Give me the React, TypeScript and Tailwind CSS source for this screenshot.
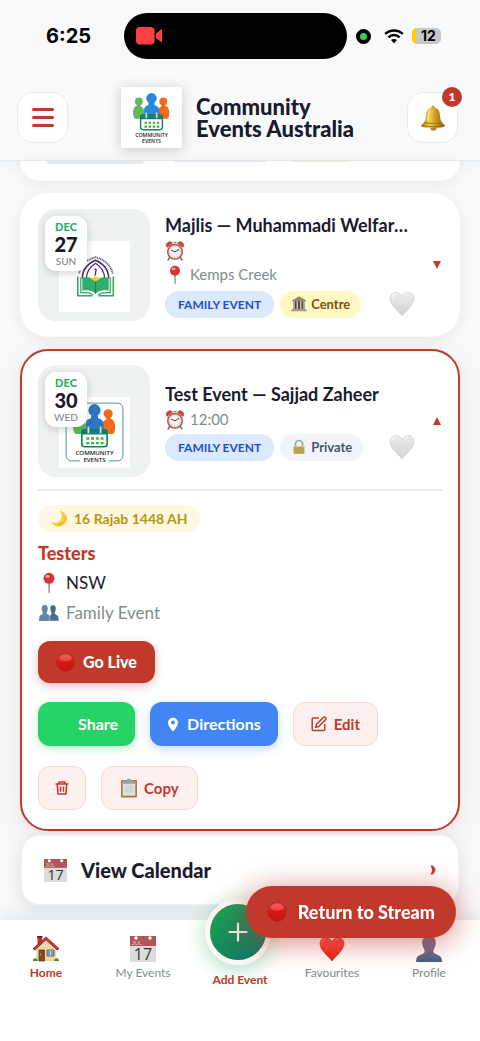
import type { ReactNode } from "react";

function ClockIcon() {
  return (
    <svg viewBox="0 0 20 20" className="size-5" aria-hidden="true">
      <path d="M5 16l-2 3M15 16l2 3" stroke="#6f6b6b" strokeWidth="1.4" strokeLinecap="round" />
      <path d="M2 6.4A3.2 3.2 0 0 1 7.6 2.2zM18 6.4a3.2 3.2 0 0 0-5.6-4.2z" fill="#c94b40" stroke="#8f302b" strokeWidth=".4" />
      <path d="M8.5 1.5h3" stroke="#8b8585" strokeWidth="1.2" />
      <circle cx="10" cy="10.8" r="8" fill="#c5443a" />
      <circle cx="10" cy="10.8" r="6.5" fill="#f3f1ee" stroke="#a5a5a5" strokeWidth=".5" />
      <circle cx="10" cy="10.8" r="5.3" fill="none" stroke="#666" strokeWidth=".8" strokeDasharray=".5 2.275" />
      <path d="M6.500 9.300l3.500 1.500 3.800-2.300" fill="none" stroke="#333" strokeWidth=".9" strokeLinecap="round" />
    </svg>
  );
}

function PushpinIcon({ className }: { className: string }) {
  return (
    <svg viewBox="0 0 20 20" className={className} aria-hidden="true">
      <path d="M9.300 8h1.600l-.2 10.500-.6 1-.6-1z" fill="#9b8c86" />
      <circle cx="10" cy="5.700" r="5" fill="#d6323a" />
      <path d="M6 8.600a5 5 0 0 0 8 0 5 5 0 0 1-8 0z" fill="#9f1e27" />
      <ellipse cx="8.600" cy="3.900" rx="1.900" ry="1.400" fill="#ff9b9b" />
    </svg>
  );
}

function CalendarIcon({ className }: { className: string }) {
  return (
    <svg viewBox="0 0 26 26" className={className} aria-hidden="true">
      <path d="M0 0h26v26H0z" fill="#dcdcdc" />
      <path d="M0 0h26v10H0z" fill="#b0555b" />
      <circle cx="6" cy="2" r="1.700" fill="#fff" />
      <circle cx="20" cy="2" r="1.700" fill="#fff" />
      <text x="1.500" y="9" fontSize="6" fill="#e8c4c5" fontFamily="Liberation Sans, sans-serif">JUL</text>
      <text x="13" y="23.500" fontSize="16" textAnchor="middle" fill="#333" fontFamily="Open Sans, sans-serif">17</text>
    </svg>
  );
}

function HeartIcon({ red = false }: { red?: boolean }) {
  const id = red ? "heart-red" : "heart-white";
  return (
    <svg viewBox="0 0 26 26" className="size-[26px]" aria-hidden="true">
      <defs>
        <linearGradient id={id} x1="0" y1="0" x2="0" y2="1">
          <stop offset="0" stopColor={red ? "#ff4a3f" : "#ececec"} />
          <stop offset="1" stopColor={red ? "#e12219" : "#d2d2d2"} />
        </linearGradient>
      </defs>
      <path
        d="M13 25C10 20.500 1 14.500 1 7.700 1 3.900 3.600 1.500 6.800 1.500c2.800 0 5 1.600 6.200 4.300 1.200-2.700 3.400-4.300 6.200-4.300 3.200 0 5.800 2.400 5.800 6.200C25 14.500 16 20.500 13 25z"
        fill={`url(#${id})`}
        stroke={red ? "#c4221c" : "#c9c9c9"}
        strokeWidth=".6"
      />
      <path d="M3 7c.4-2.400 2-3.700 4-3.700M16 4.500c1-.9 2-1.200 3.200-1.200" fill="none" stroke={red ? "#ff8f86" : "#fff"} strokeWidth="1" />
    </svg>
  );
}

function BellIcon() {
  return (
    <svg viewBox="0 0 26 26" className="size-[26px]" aria-hidden="true">
      <defs>
        <linearGradient id="brass" x1="0" x2="1">
          <stop offset="0" stopColor="#a87a10" />
          <stop offset=".35" stopColor="#f3cf4c" />
          <stop offset=".65" stopColor="#c5941c" />
          <stop offset="1" stopColor="#8f620c" />
        </linearGradient>
      </defs>
      <ellipse cx="13.500" cy="23.500" rx="3" ry="2" fill="#b8742e" />
      <circle cx="13" cy="2.500" r="1.800" fill="#c79b25" />
      <path d="M13 2.600c5 0 6.700 3.600 7 8 .3 4.500 1.300 6.800 4.400 9.200.8.700.4 2-.7 2.200-6.500 1.500-15 1.500-21.400 0-1.100-.3-1.500-1.500-.7-2.200C4.700 17.400 5.700 15.100 6 10.600c.3-4.400 2-8 7-8z" fill="url(#brass)" />
      <path d="M4.500 17.500c5 1.300 12 1.300 17 0M2 20.500c7 1.700 15 1.700 22 0" fill="none" stroke="#8c640f" strokeWidth=".8" />
      <path d="M9.500 6c-1.200 2-1 6-1.800 10" fill="none" stroke="#fff1a0" strokeWidth="1.200" />
    </svg>
  );
}

function BuildingIcon() {
  return (
    <svg viewBox="0 0 16 16" className="size-4" aria-hidden="true">
      <path d="M8 .8l7 4H1z" fill="#8c8778" stroke="#6e6a5e" strokeWidth=".5" />
      <path d="M2 5h12v8H2z" fill="#4c463c" />
      <path d="M3 5v8M6.300 5v8M9.700 5v8M13 5v8" stroke="#d0c7ae" strokeWidth="1.500" />
      <path d="M1 13h14v1H1zM0 14h16v1.200H0z" fill="#a49d8a" />
    </svg>
  );
}

function LockIcon() {
  return (
    <svg viewBox="0 0 16 16" className="size-4" aria-hidden="true">
      <path d="M4.500 8V5a3.500 3.500 0 0 1 7 0v3" fill="none" stroke="#9da2a4" strokeWidth="1.700" />
      <rect x="2.500" y="7" width="11" height="8" rx=".8" fill="#c2b05a" />
      <path d="M3 9h10M3 11h10M3 13h10" stroke="#9d8b3d" strokeWidth=".6" />
      <path d="M3 7.500h10" stroke="#e6dc98" strokeWidth=".7" />
    </svg>
  );
}

function MoonIcon() {
  return (
    <svg viewBox="0 0 18 18" className="size-[18px]" aria-hidden="true">
      <path d="M9.500.8c5 .7 8 4.300 7.500 8.700-.6 4.600-4.500 7.600-9 7.200C4.700 16.400 2 14.400 1 11.800c3 1.500 6.500 1.200 8.700-.8 2.700-2.500 2.600-7-.2-10.200z" fill="#f9cf48" />
      <path d="M15.500 7c.3 4.500-3.500 8-8.500 7.700" fill="none" stroke="#e2a91e" strokeWidth=".9" />
    </svg>
  );
}

function PeopleIcon() {
  return (
    <svg viewBox="-1 0 22 18" className="h-[18px] w-[22px]" aria-hidden="true">
      <path d="M5.700 1C8 1 9 2.800 8.800 5c-.2 2-1 3-1.100 4.300 0 1.300 3.300 1.500 3.800 3.500L12 17H0l.4-4.200c.4-2 3.400-2.200 3.400-3.500C3.700 8 2.900 7 2.700 5 2.500 2.800 3.400 1 5.700 1z" fill="#6286a6" />
      <path d="M14 1c2.300 0 3.200 1.800 3 4-.2 2-1 3-1.100 4.300 0 1.300 3.100 1.500 3.500 3.500L20 17h-9.500l.4-4.200c.3-2 1.400-2.200 1.400-3.500C12.100 8 11.300 7 11.100 5c-.2-2.200.6-4 2.900-4z" fill="#476c90" stroke="#fff" strokeWidth=".4" />
    </svg>
  );
}

function RedBall({ className }: { className: string }) {
  return (
    <svg viewBox="0 0 20 20" className={className} aria-hidden="true">
      <defs>
        <linearGradient id="ball" x1="0" y1="0" x2="0" y2="1">
          <stop offset="0" stopColor="#f0413c" />
          <stop offset=".5" stopColor="#d91512" />
          <stop offset="1" stopColor="#c41512" />
        </linearGradient>
      </defs>
      <circle cx="10" cy="10" r="9.300" fill="url(#ball)" stroke="#9d1f1b" strokeWidth=".5" />
      <ellipse cx="10" cy="5.200" rx="6.500" ry="3.600" fill="#fff" opacity=".18" />
    </svg>
  );
}

function ClipboardIcon() {
  return (
    <svg viewBox="0 0 18 20" className="h-5 w-[18px]" aria-hidden="true">
      <rect x="1" y="2" width="16" height="17.500" rx="1" fill="#a77b47" />
      <path d="M2.700 4.500h12.600v13.200H2.700z" fill="#e1e1e1" />
      <path d="M4.500 8h9M4.500 10h9M4.500 12h9M4.500 14h9" stroke="#c2c5c7" strokeWidth=".8" />
      <path d="M2.500 2.700h4L7.500.8h3l1 1.900h4v3h-13z" fill="#9ba0a5" />
    </svg>
  );
}

function TrashIcon() {
  return (
    <svg viewBox="0 0 16 16" className="size-4" fill="none" stroke="#c0392b" strokeWidth="1.500" aria-hidden="true">
      <path d="M1.500 4h13M5 4V2h6v2M3.300 4l.7 10h8l.7-10M6.500 6.500v5.300M9.500 6.500v5.300" strokeLinejoin="round" />
    </svg>
  );
}

function EditIcon() {
  return (
    <svg viewBox="0 0 16 16" className="size-4" fill="none" stroke="#c0392b" strokeWidth="1.500" strokeLinejoin="round" aria-hidden="true">
      <path d="M8 2H2.500a1.300 1.300 0 0 0-1.300 1.300v10a1.300 1.300 0 0 0 1.300 1.300h10a1.300 1.300 0 0 0 1.300-1.300V8" />
      <path d="M5.500 8.300L12.300 1.500a1.500 1.500 0 0 1 2.200 2.200L7.700 10.500l-3 .8z" />
    </svg>
  );
}

function HouseIcon() {
  return (
    <svg viewBox="0 0 26 26" className="size-[26px]" aria-hidden="true">
      <path d="M4.500 1h4.500v8H4.500z" fill="#b7332d" />
      <path d="M4 0h5.500v1.800H4z" fill="#672522" />
      <path d="M13 3.500L23 13v12H3V13z" fill="#f0d8a5" />
      <path d="M.8 13.500L13 2.300l12.200 11.200" fill="none" stroke="#5b2422" strokeWidth="2.800" />
      <path d="M1.500 12.500L13 2l11.500 10.500" fill="none" stroke="#cb3d34" strokeWidth="1.900" />
      <path d="M6 14h5.500v11H6z" fill="#85472f" stroke="#5c2d20" strokeWidth=".7" />
      <path d="M14 14h7v6h-7z" fill="#5ba8dc" stroke="#8e623f" strokeWidth="1" />
      <path d="M17.500 14v6" stroke="#e8f0f4" strokeWidth=".6" />
      <circle cx="7.500" cy="18.500" r=".7" fill="#e5c25b" />
      <path d="M0 25c-.3-3 4-4.300 5 0zM21 25c1-4.300 5.300-3 5 0z" fill="#3f8c31" />
    </svg>
  );
}

function ProfileIcon() {
  return (
    <svg viewBox="0 0 26 26" className="size-[26px]" aria-hidden="true">
      <defs>
        <linearGradient id="bust" x1="0" y1="0" x2="0" y2="1">
          <stop offset="0" stopColor="#806b88" />
          <stop offset=".65" stopColor="#666b8c" />
          <stop offset="1" stopColor="#405d83" />
        </linearGradient>
      </defs>
      <path d="M13 0c5 0 7.300 3.500 6.700 8-.4 3.400-2.200 5-2.400 7.500-.1 3.300 7.200 2.500 8.200 7L26 26H0l.5-3.500c1-4.500 8.300-3.700 8.200-7C8.500 13 6.700 11.400 6.300 8 5.700 3.500 8 0 13 0z" fill="url(#bust)" />
    </svg>
  );
}

function CommunityLogo({ framed = false, className }: { framed?: boolean; className: string }) {
  return (
    <svg viewBox="0 0 70 70" className={className} role="img" aria-label="Community Events">
      <path d="M0 0h70v70H0z" fill="#fff" />
      {framed && <path d="M21 63h-9a5 5 0 0 1-5-5V11a5 5 0 0 1 5-5h46a5 5 0 0 1 5 5v47a5 5 0 0 1-5 5h-9" fill="none" stroke="#438a83" strokeWidth=".9" />}
      <g fill="#62b95b">
        <circle cx="20.500" cy="16.500" r="4.500" />
        <path d="M18.500 20h4v2.500c3 1 4 3 4 6.500v7.500H16c-3-3-3-13 1-14.500 1-.3 1.500-.5 1.500-2z" />
      </g>
      <g fill="#f76b18">
        <circle cx="48.500" cy="16.500" r="4.500" />
        <path d="M46.500 20h4c0 1.500.5 1.700 1.500 2 4 1.500 4.500 11.500 1.500 14.500H42V29c0-3.500 1.500-5.500 4.500-6.500z" />
      </g>
      <g fill={framed ? "#2d78c4" : "#2589dc"}>
        <circle cx="35" cy="13" r="6" />
        <path d="M31.500 18h7v3c4.500 1 5.500 4 5.500 7v6H26.500v-7c0-3 1-5 5-6z" />
      </g>
      <rect x="22.500" y="32" width="25" height="17" rx="3" fill="#fff" stroke="#12806e" strokeWidth="1.600" />
      <path d="M22 37v-2.500a3 3 0 0 1 3-3h20a3 3 0 0 1 3 3V37z" fill="#12806e" />
      <path d="M27 41h17M27 45.500h17" stroke="#43ae35" strokeWidth="2.400" strokeDasharray="2.800 1.900" />
      <path d="M29 30v5M41 30v5" stroke="#7c9b98" strokeWidth="2.600" strokeLinecap="round" />
      <path d="M29 30v5M41 30v5" stroke="#dae4e2" strokeWidth="1.200" strokeLinecap="round" />
      <text x="35" y="57.500" fontSize="6" fontWeight="600" textAnchor="middle" fill="#222" fontFamily="Open Sans, sans-serif">COMMUNITY</text>
      <text x="35" y="64" fontSize="6" fontWeight="600" textAnchor="middle" fill="#222" fontFamily="Open Sans, sans-serif">EVENTS</text>
    </svg>
  );
}

function MajlisLogo({ className }: { className: string }) {
  return (
    <svg viewBox="0 0 70 70" className={className} role="img" aria-label="Muhammadi Welfare">
      <path d="M0 0h70v70H0z" fill="#fff" />
      <path d="M20 32c1-8 6-13 16-16 10 3 15 8 17 16" fill="none" stroke="#654077" strokeWidth="1.800" strokeDasharray="1 .7" />
      <path d="M23 37c0-8 4-14 13-18 9 4 13 10 13 18" fill="none" stroke="#4d226b" strokeWidth="1.500" />
      <path d="M27 37c0-6 3-11 9-15 6 4 9 9 9 15" fill="none" stroke="#4d226b" strokeWidth="1.100" />
      <path d="M35 28c3-1 1 2 1 3s1 2-1 3" fill="none" stroke="#4d226b" strokeWidth="1.200" />
      <path d="M23 36c6-1 10 0 13 3 3-3 7-4 13-3v13c-6-1-10 0-13 3-3-3-7-4-13-3z" fill="#30ad6d" />
      <path d="M36 39v13" stroke="#1c8250" strokeWidth="1" />
      <path d="M18.500 35v19H33M53.500 35v19H39" fill="none" stroke="#2aac62" strokeWidth="1.500" />
      <path d="M21.500 36v15c5-.5 9 0 12 2M50.500 36v15c-5-.5-9 0-12 2" fill="none" stroke="#2aac62" strokeWidth="1.200" />
      <path d="M31 37l5-2 5 2-5 3z" fill="#f7cf19" />
    </svg>
  );
}

function StatusBar() {
  return (
    <div className="flex h-[72px] items-center pr-[39px] pl-[46px] font-['Inter',sans-serif]">
      <time className="w-[78px] text-xl font-bold text-black">6:25</time>
      <div className="flex h-[46px] flex-1 items-center rounded-full bg-black pl-3">
        <svg viewBox="0 0 26 18" className="h-[18px] w-[26px]" fill="#ff4145" aria-label="Recording" role="img">
          <rect width="18.500" height="17.500" rx="4" />
          <path d="M19.800 6.800L25 2.500c.5-.4 1-.1 1 .5v11.500c0 .6-.5.9-1 .5l-5.200-4.300z" />
        </svg>
      </div>
      <span className="mx-[9px] size-[15px] rounded-full border-4 border-black bg-[#30d158]" />
      <svg viewBox="0 0 20 15" className="mr-2 ml-1 h-[15px] w-5" fill="none" stroke="#000" strokeWidth="2.500" aria-label="Wi-Fi" role="img">
        <path d="M1.200 4.900c5-4.700 12.600-4.700 17.600 0M4.400 8.300c3.200-3 8-3 11.200 0" />
        <path d="M7 11c1.700-1.500 4.300-1.500 6 0l-3 3.300z" fill="#000" stroke="none" />
      </svg>
      <div className="h-4 w-[29px] overflow-hidden rounded-[5px] border-l-4 border-[#ffcc00] bg-[#c7c8ca] text-center text-sm leading-4 font-bold text-black">
        12
      </div>
    </div>
  );
}

function Header() {
  return (
    <header className="border-b border-[#e6ebef] bg-[#f8f9fb] shadow-[0_2px_12px_rgba(0,0,0,0.06)]">
      <StatusBar />
      <div className="flex h-[88px] items-center justify-between pt-1 pr-[22px] pb-px pl-[17px]">
        <button aria-label="Menu" className="flex size-[51px] flex-col items-center justify-center gap-[5px] rounded-2xl border border-[#e6ecf0] bg-white">
          <span className="h-[3px] w-[22px] rounded-full bg-[#c0392b]" />
          <span className="h-[3px] w-[22px] rounded-full bg-[#c0392b]" />
          <span className="h-[3px] w-[22px] rounded-full bg-[#c0392b]" />
        </button>
        <div className="flex items-center gap-[14px]">
          <CommunityLogo className="size-[61px] shadow-[0_2px_12px_rgba(0,0,0,0.2)]" />
          <h1 className="text-[22px] leading-[22px] font-black">
            Community
            <br />
            Events Australia
          </h1>
        </div>
        <button aria-label="Notifications" className="relative flex size-[51px] items-center justify-center rounded-2xl border border-[#e6ecf0] bg-white">
          <BellIcon />
          <span className="absolute -top-[6px] -right-[5px] size-5 rounded-full bg-[#c0392b] text-center text-xs leading-5 font-black text-white">
            1
          </span>
        </button>
      </div>
    </header>
  );
}

type EventSummaryProps = {
  day: string;
  weekday: string;
  title: string;
  time?: string;
  place?: string;
  logo: ReactNode;
  tag: ReactNode;
  open?: boolean;
};

function EventSummary({ day, weekday, title, time, place, logo, tag, open = false }: EventSummaryProps) {
  return (
    <div className="flex items-center">
      <div className="relative flex h-28 w-28 shrink-0 justify-center rounded-[18px] bg-[#eff2f2] pt-8">
        {logo}
        <div className="absolute top-[7px] left-[7px] flex h-[55px] w-[42px] flex-col items-center rounded-[11px] bg-white pt-1 shadow-[0_2px_8px_rgba(0,0,0,0.18)]">
          <span className="text-[11px] leading-[14px] font-black text-[#27ae60]">DEC</span>
          <span className="text-xl leading-5 font-black">{day}</span>
          <span className="text-[10px] leading-[14px] font-medium text-[#7f8c8d]">{weekday}</span>
        </div>
      </div>
      <div className="ml-[15px] min-w-0 flex-1">
        <h2 className="mb-[2px] truncate text-lg leading-6 font-bold">{title}</h2>
        <p className="flex h-6 items-center gap-[5px] text-[15px] text-[#7f8c8d]">
          <ClockIcon />
          {time}
        </p>
        {place && (
          <p className="mb-1 flex h-6 items-center gap-[5px] text-[15px] text-[#7f8c8d]">
            <PushpinIcon className="size-5" />
            {place}
          </p>
        )}
        <div className="mt-[2px] flex items-center gap-[6px]">
          <span className="rounded-full bg-[#dbeafe] px-[13px] text-xs leading-[27px] font-bold text-[#1d4ed8]">FAMILY EVENT</span>
          {tag}
          <button aria-label="Add to favourites" className="ml-auto">
            <HeartIcon />
          </button>
        </div>
      </div>
      <button aria-label={open ? "Collapse" : "Expand"} aria-expanded={open} className="ml-[17px] w-[10px]">
        <svg viewBox="0 0 10 10" className="size-[10px]" fill="#c0392b" aria-hidden="true">
          {open ? <path d="M5 1l4 8H1z" /> : <path d="M1 1h8L5 9z" />}
        </svg>
      </button>
    </div>
  );
}

function ExpandedDetails() {
  return (
    <div className="mt-3 border-t-2 border-[#e9edf1] pt-[14px]">
      <div className="flex h-[27px] w-fit items-center gap-[6px] rounded-full bg-[#fef8e3] px-3 text-sm font-bold text-[#b8960c]">
        <MoonIcon />
        16 Rajab 1448 AH
      </div>
      <h3 className="mt-[6px] text-lg leading-[30px] font-black text-[#c0392b]">Testers</h3>
      <p className="flex h-[30px] items-center gap-[6px] text-[17px]">
        <PushpinIcon className="size-[22px]" />
        NSW
      </p>
      <p className="flex h-[30px] items-center gap-[6px] text-[17px] text-[#7f8c8d]">
        <PeopleIcon />
        Family Event
      </p>
      <button className="mt-[13px] flex h-[42px] items-center gap-2 rounded-xl bg-[#c0392b] px-[18px] text-base font-black text-white shadow-[0_3px_10px_rgba(192,57,43,0.3)]">
        <RedBall className="size-[19px]" />
        Go Live
      </button>
      <div className="mt-[19px] flex flex-wrap gap-x-[15px] gap-y-5 pr-2">
        <button className="h-11 rounded-xl bg-[#25d366] pr-[17px] pl-10 text-base font-bold text-white shadow-[0_3px_10px_rgba(37,211,102,0.3)]">
          Share
        </button>
        <button className="flex h-11 items-center gap-2 rounded-xl bg-[#4285f4] px-[17px] text-base font-bold text-white shadow-[0_3px_10px_rgba(66,133,244,0.3)]">
          <svg viewBox="0 0 12 15" className="h-[15px] w-3" fill="#fff" aria-hidden="true">
            <path fillRule="evenodd" d="M6 .7a5 5 0 0 0-5 5C1 9.300 6 14.500 6 14.500s5-5.200 5-8.800a5 5 0 0 0-5-5zm0 6.700A1.900 1.900 0 1 1 6 3.600a1.900 1.900 0 0 1 0 3.800z" />
          </svg>
          Directions
        </button>
        <button className="flex h-11 items-center gap-[7px] rounded-xl border border-[#f8d8d6] bg-[#fdf0ef] px-[17px] text-[15px] font-bold text-[#c0392b]">
          <EditIcon />
          Edit
        </button>
        <button aria-label="Delete" className="flex h-11 w-12 items-center justify-center rounded-xl border border-[#f8d8d6] bg-[#fdf0ef]">
          <TrashIcon />
        </button>
        <button className="flex h-11 items-center gap-[6px] rounded-xl border border-[#f8d8d6] bg-[#fdf0ef] px-[18px] text-[15px] font-bold text-[#c0392b]">
          <ClipboardIcon />
          Copy
        </button>
      </div>
    </div>
  );
}

function NavItem({ icon, label, active = false }: { icon: ReactNode; label: string; active?: boolean }) {
  return (
    <a href="#" className={active ? "flex flex-col items-center pt-4 font-bold text-[#c0392b]" : "flex flex-col items-center pt-4 text-[#7f8c8d]"}>
      {icon}
      <span className="mt-[3px] text-xs leading-4">{label}</span>
    </a>
  );
}

function BottomNav() {
  return (
    <nav className="mt-[13px] grid grid-cols-[92fr_102fr_92fr_92fr_102fr] border-t border-[#e9edf1] bg-white pb-[54px] shadow-[0_-3px_16px_rgba(0,0,0,0.08)]">
      <NavItem icon={<HouseIcon />} label="Home" active />
      <NavItem icon={<CalendarIcon className="size-[26px]" />} label="My Events" />
      <a href="#" className="-mt-[21px] flex flex-col items-center font-bold text-[#c0392b]">
        <span className="mr-1 flex size-[66px] items-center justify-center rounded-full border-[5px] border-[#fff5f4] bg-linear-to-br from-[#1ca64f] to-[#127064] shadow-[0_4px_20px_rgba(39,174,96,0.4)]">
          <svg viewBox="0 0 20 20" className="size-5" stroke="#f8efe9" strokeWidth="2.200" strokeLinecap="round" aria-hidden="true">
            <path d="M10 1.500v17M1.500 10h17" />
          </svg>
        </span>
        <span className="mt-[7px] text-xs leading-4">Add Event</span>
      </a>
      <NavItem icon={<HeartIcon red />} label="Favourites" />
      <NavItem icon={<ProfileIcon />} label="Profile" />
    </nav>
  );
}

export default function App() {
  return (
    <div className="relative flex min-h-screen flex-col bg-[#f8f9fb] font-['Lato','Open_Sans',sans-serif] text-[#1a1a2e]">
      <Header />
      <main className="px-5">
        {/* tail of the card that is scrolled under the header */}
        <div className="flex h-5 items-start rounded-b-[28px] bg-white px-[26px] shadow-[0_4px_16px_rgba(0,0,0,0.06)]">
          <span className="h-[3px] w-[98px] rounded-b-full bg-[#e6eaed]" />
          <span className="ml-[30px] h-px w-[92px] bg-[#dfe8f1]" />
          <span className="ml-[26px] h-px w-[58px] bg-[#f4ecd2]" />
        </div>
        <article className="mt-3 rounded-[28px] bg-white px-[18px] py-4 shadow-[0_4px_16px_rgba(0,0,0,0.06)]">
          <EventSummary
            day="27"
            weekday="SUN"
            title="Majlis — Muhammadi Welfare Association"
            place="Kemps Creek"
            logo={<MajlisLogo className="size-[71px]" />}
            tag={
              <span className="flex items-center gap-1 rounded-full bg-[#fef9c3] px-[11px] text-[13px] leading-[27px] font-bold text-[#854d0e]">
                <BuildingIcon />
                Centre
              </span>
            }
          />
        </article>
        <article className="mt-3 rounded-[28px] border-2 border-[#c0392b] bg-white px-4 pt-[14px] pb-[19px] shadow-[0_6px_24px_rgba(192,57,43,0.12)]">
          <EventSummary
            day="30"
            weekday="WED"
            title="Test Event — Sajjad Zaheer"
            time="12:00"
            logo={<CommunityLogo framed className="size-[71px]" />}
            tag={
              <span className="flex items-center gap-1 rounded-full bg-[#f1f5f9] px-[11px] text-[13px] leading-[27px] font-bold text-[#475569]">
                <LockIcon />
                Private
              </span>
            }
            open
          />
          <ExpandedDetails />
        </article>
        <a href="#" className="mt-[3px] flex h-[72px] items-center rounded-[20px] border-2 border-[#eef1f3] bg-white pr-[22px] pl-[22px] shadow-[0_4px_16px_rgba(0,0,0,0.1)]">
          <CalendarIcon className="size-[23px]" />
          <span className="ml-[14px] text-xl font-black">View Calendar</span>
          <svg viewBox="0 0 6 10" className="ml-auto h-[10px] w-[6px]" aria-hidden="true">
            <path d="M.5.500h2.200c1 .8 2.800 3 2.800 4.500S3.700 8.700 2.700 9.500H.5C1.200 8 2 6.500 2 5S1.200 2 .5.500z" fill="#c0392b" />
          </svg>
        </a>
      </main>
      <BottomNav />
      <div className="flex-1 bg-white" />
      <button className="fixed right-6 bottom-[103px] flex h-[52px] items-center gap-[11px] rounded-full bg-[#c0392b] px-[21px] text-lg font-black text-white shadow-[0_4px_30px_rgba(192,57,43,0.6)]">
        <RedBall className="size-5" />
        Return to Stream
      </button>
    </div>
  );
}
